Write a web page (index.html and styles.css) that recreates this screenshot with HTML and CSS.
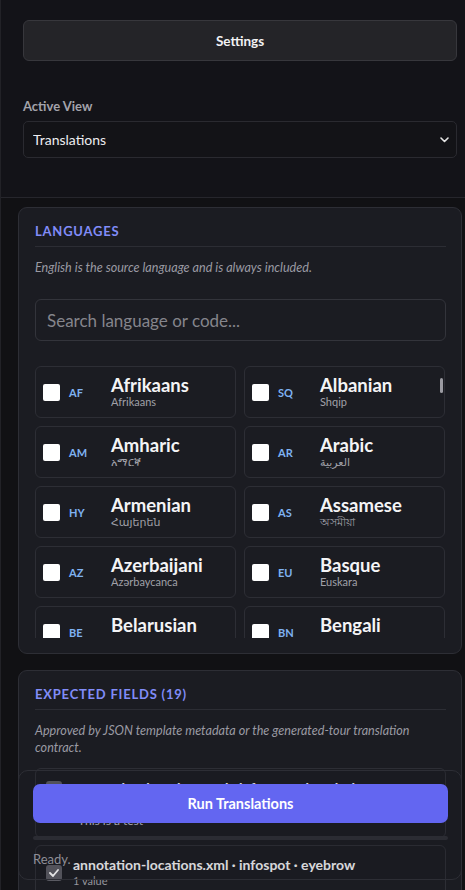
FILE: index.html
```html
<!DOCTYPE html>
<html lang="en">
<head>
  <meta charset="UTF-8" />
  <meta name="viewport" content="width=device-width, initial-scale=1.0"/>
  <title>Tour Translations</title>
  <link rel="stylesheet" href="styles.css">
</head>
<body>
  <aside class="sidebar">
    <div class="sidebar-head">
      <button class="btn-settings" type="button">Settings</button>
      <label class="field-label" for="activeView">Active View</label>
      <div class="select-wrap">
        <select id="activeView">
          <option>Translations</option>
        </select>
        <svg class="select-chevron" width="9" height="6" viewBox="0 0 9 6">
          <polyline points="1,1 4.5,4.5 8,1" fill="none" stroke="#e5e5e5" stroke-width="1.6" stroke-linecap="round" stroke-linejoin="round"/>
        </svg>
      </div>
    </div>

    <div class="sidebar-body">
      <section class="panel">
        <h2 class="panel-title">Languages</h2>
        <p class="panel-note">English is the source language and is always included.</p>
        <input class="search" type="text" placeholder="Search language or code...">

        <div class="lang-scroll">
          <div class="lang-grid">
            <label class="lang-card"><input type="checkbox"><span class="lang-code">AF</span><span class="lang-text"><span class="lang-name">Afrikaans</span><span class="lang-native">Afrikaans</span></span></label>
            <label class="lang-card"><input type="checkbox"><span class="lang-code">SQ</span><span class="lang-text"><span class="lang-name">Albanian</span><span class="lang-native">Shqip</span></span></label>
            <label class="lang-card"><input type="checkbox"><span class="lang-code">AM</span><span class="lang-text"><span class="lang-name">Amharic</span><span class="lang-native">አማርኛ</span></span></label>
            <label class="lang-card"><input type="checkbox"><span class="lang-code">AR</span><span class="lang-text"><span class="lang-name">Arabic</span><span class="lang-native">العربية</span></span></label>
            <label class="lang-card"><input type="checkbox"><span class="lang-code">HY</span><span class="lang-text"><span class="lang-name">Armenian</span><span class="lang-native">Հայերեն</span></span></label>
            <label class="lang-card"><input type="checkbox"><span class="lang-code">AS</span><span class="lang-text"><span class="lang-name">Assamese</span><span class="lang-native">অসমীয়া</span></span></label>
            <label class="lang-card"><input type="checkbox"><span class="lang-code">AZ</span><span class="lang-text"><span class="lang-name">Azerbaijani</span><span class="lang-native">Azərbaycanca</span></span></label>
            <label class="lang-card"><input type="checkbox"><span class="lang-code">EU</span><span class="lang-text"><span class="lang-name">Basque</span><span class="lang-native">Euskara</span></span></label>
            <label class="lang-card"><input type="checkbox"><span class="lang-code">BE</span><span class="lang-text"><span class="lang-name">Belarusian</span><span class="lang-native">Беларуская</span></span></label>
            <label class="lang-card"><input type="checkbox"><span class="lang-code">BN</span><span class="lang-text"><span class="lang-name">Bengali</span><span class="lang-native">বাংলা</span></span></label>
          </div>
          <span class="scroll-thumb"></span>
        </div>
      </section>

      <section class="panel">
        <h2 class="panel-title">Expected Fields (19)</h2>
        <p class="panel-note">Approved by JSON template metadata or the generated-tour translation contract.</p>

        <div class="field-list">
          <div class="field-item has-values">
            <span class="field-check"><svg width="10" height="8" viewBox="0 0 10 8"><polyline points="1,4 4,7 9,1" fill="none" stroke="#fff" stroke-width="1.8" stroke-linecap="round" stroke-linejoin="round"/></svg></span>
            <div class="field-text">
              <div class="field-name">annotation-locations.xml · infospot · description</div>
              <div class="field-count">1 value</div>
              <div class="field-value">This is a test</div>
            </div>
          </div>
          <div class="field-item">
            <span class="field-check"><svg width="10" height="8" viewBox="0 0 10 8"><polyline points="1,4 4,7 9,1" fill="none" stroke="#fff" stroke-width="1.8" stroke-linecap="round" stroke-linejoin="round"/></svg></span>
            <div class="field-text">
              <div class="field-name">annotation-locations.xml · infospot · eyebrow</div>
              <div class="field-count">1 value</div>
            </div>
          </div>
        </div>
      </section>
    </div>

    <!-- sticky run bar, floats over the field list -->
    <div class="run-bar">
      <button class="btn-run" type="button">Run Translations</button>
      <div class="progress"><div class="progress-fill" style="width: 0%"></div></div>
      <div class="run-status">Ready.</div>
    </div>
  </aside>
</body>
</html>
```

FILE: styles.css
```css
body {
  margin: 0;
  background: #111114;
  font-family: Lato, "Noto Sans", "DejaVu Sans", sans-serif;
  color: #ececef;
  overflow: hidden;
}

.sidebar {
  position: relative;
  height: 890px;
  border-left: 1px solid #222227;
  overflow: hidden;
}

/* header: settings + view picker */
.sidebar-head {
  background: #131318;
  padding: 20px 8px 39px 22px;
  border-bottom: 1px solid #26262c;
}

.btn-settings {
  display: block;
  width: 100%;
  height: 41px;
  background: #242428;
  border: 1px solid #37373c;
  border-radius: 6px;
  color: #f2f2f4;
  font-family: inherit;
  font-size: 13.5px;
  font-weight: 700;
  cursor: pointer;
}

.field-label {
  display: block;
  margin: 37px 0 6px;
  font-size: 13px;
  font-weight: 700;
  line-height: 17px;
  color: #a3a3ab;
}

.select-wrap {
  position: relative;
}

.select-wrap select {
  display: block;
  width: 100%;
  height: 37px;
  appearance: none;
  background: #131317;
  border: 1px solid #2a2a30;
  border-radius: 5px;
  color: #ededf0;
  font-family: inherit;
  font-size: 14px;
  padding: 0 9px;
}

.select-chevron {
  position: absolute;
  right: 8px;
  top: 16px;
  pointer-events: none;
}

/* scrolling body */
.sidebar-body {
  padding: 9px 3px 0 17px;
}

.panel {
  background: #1b1c22;
  border: 1px solid #2d2e35;
  border-radius: 9px;
  padding: 14px 15px 15px 16px;
  margin-bottom: 16px;
}

.panel-title {
  margin: 0;
  padding-bottom: 6px;
  border-bottom: 1px solid #2c2d34;
  font-size: 13px;
  line-height: 18px;
  font-weight: 700;
  letter-spacing: 0.06em;
  text-transform: uppercase;
  color: #818cf8;
}

.panel-note {
  margin: 12px 0 0;
  font-size: 12.6px;
  line-height: 17px;
  font-style: italic;
  color: #9a9aa3;
}

.search {
  display: block;
  box-sizing: border-box;
  width: 100%;
  height: 42px;
  margin-top: 23px;
  padding: 0 11px;
  background: transparent;
  border: 1px solid #33343b;
  border-radius: 6px;
  color: #eee;
  font-family: inherit;
  font-size: 17px;
}

.search::placeholder {
  color: #85858c;
}

.lang-scroll {
  position: relative;
  height: 272px;
  margin-top: 25px;
  overflow: hidden;
}

.lang-grid {
  display: grid;
  grid-template-columns: 201px 201px;
  column-gap: 8px;
  row-gap: 8px;
}

.lang-card {
  display: flex;
  align-items: center;
  box-sizing: border-box;
  height: 52px;
  padding-left: 7px;
  border: 1px solid #2d2e35;
  border-radius: 6px;
  cursor: pointer;
}

.lang-card input {
  appearance: none;
  flex: none;
  width: 17px;
  height: 17px;
  margin: 0;
  background: #fff;
  border-radius: 2px;
}

.lang-code {
  flex: none;
  width: 32px;
  margin-left: 9px;
  font-size: 11px;
  font-weight: 700;
  color: #7fb2f2;
}

.lang-text {
  display: flex;
  flex-direction: column;
  margin-left: 10px;
}

.lang-name {
  font-size: 18.5px;
  line-height: 20px;
  font-weight: 700;
  color: #f4f4f6;
}

.lang-native {
  font-size: 11px;
  line-height: 14px;
  color: #a0a0a8;
}

.scroll-thumb {
  position: absolute;
  top: 12px;
  right: 3px;
  width: 3px;
  height: 15px;
  border-radius: 2px;
  background: #9b9ba2;
}

/* expected fields */
.field-list {
  display: flex;
  flex-direction: column;
  gap: 7px;
  margin-top: 12px;
}

.field-item {
  display: flex;
  align-items: center;
  gap: 11px;
  padding: 10px 10px 8px;
  border: 1px solid #2d2e35;
  border-radius: 6px;
}

.field-item.has-values {
  align-items: flex-start;
}

.field-check {
  flex: none;
  display: flex;
  align-items: center;
  justify-content: center;
  width: 16px;
  height: 16px;
  margin-top: 2px;
  border-radius: 3px;
  background: #5a5a62;
}

.field-name {
  font-size: 14px;
  line-height: 18px;
  font-weight: 700;
  color: #f2f2f4;
}

.field-count {
  font-size: 11px;
  line-height: 14px;
  color: #96969e;
}

.field-value {
  margin-top: 2px;
  padding-left: 5px;
  font-size: 12px;
  line-height: 16px;
  color: #b8b8c0;
}

/* run bar */
.run-bar {
  position: absolute;
  left: 17px;
  bottom: 10px;
  box-sizing: border-box;
  width: 444px;
  height: 110px;
  padding: 13px 13px 0 14px;
  border: 1px solid #2d2e35;
  border-radius: 10px;
  background: rgba(27, 28, 34, 0.12);
}

.btn-run {
  display: block;
  width: 100%;
  height: 39px;
  border: none;
  border-radius: 7px;
  background: #6366f1;
  color: #fff;
  font-family: inherit;
  font-size: 14.5px;
  font-weight: 700;
  cursor: pointer;
}

.progress {
  height: 4px;
  margin-top: 13px;
  border-radius: 2px;
  background: #2b2c33;
  overflow: hidden;
}

.progress-fill {
  height: 100%;
  background: #6366f1;
}

.run-status {
  margin-top: 11px;
  font-size: 13px;
  line-height: 16px;
  color: #8e8e96;
}
```
